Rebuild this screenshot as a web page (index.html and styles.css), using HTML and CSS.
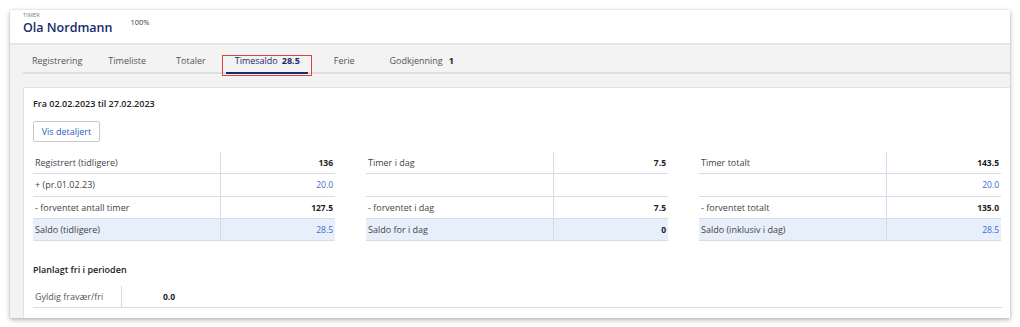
FILE: index.html
```html
<!DOCTYPE html>
<html lang="no">
<head>
<meta charset="utf-8">
<link rel="stylesheet" href="styles.css">
</head>
<body>
<div class="window">
  <header class="head">
    <div class="who">
      <div class="kicker">TIMER</div>
      <div class="name">Ola Nordmann</div>
    </div>
    <div class="pct">100%</div>
  </header>
  <div class="main">
    <nav class="tabs">
      <div class="tab t1">Registrering</div>
      <div class="tab t2">Timeliste</div>
      <div class="tab t3">Totaler</div>
      <div class="tab t4 active">Timesaldo <b>28.5</b></div>
      <div class="tab t5">Ferie</div>
      <div class="tab t6">Godkjenning <b>1</b></div>
    </nav>
    <section class="panel">
      <h2 class="title">Fra 02.02.2023 til 27.02.2023</h2>
      <button class="btn">Vis detaljert</button>
      <div class="tables">
        <div class="tbl">
          <div class="row"><span class="lbl">Registrert (tidligere)</span><span class="val">136</span></div>
          <div class="row"><span class="lbl">+ (pr.01.02.23)</span><span class="val blue">20.0</span></div>
          <div class="row"><span class="lbl">- forventet antall timer</span><span class="val">127.5</span></div>
          <div class="row sum"><span class="lbl">Saldo (tidligere)</span><span class="val blue">28.5</span></div>
        </div>
        <div class="tbl">
          <div class="row"><span class="lbl">Timer i dag</span><span class="val">7.5</span></div>
          <div class="row"><span class="lbl"></span><span class="val"></span></div>
          <div class="row"><span class="lbl">- forventet i dag</span><span class="val">7.5</span></div>
          <div class="row sum"><span class="lbl">Saldo for i dag</span><span class="val">0</span></div>
        </div>
        <div class="tbl">
          <div class="row"><span class="lbl">Timer totalt</span><span class="val">143.5</span></div>
          <div class="row"><span class="lbl"></span><span class="val blue">20.0</span></div>
          <div class="row"><span class="lbl">- forventet totalt</span><span class="val">135.0</span></div>
          <div class="row sum"><span class="lbl">Saldo (inklusiv i dag)</span><span class="val blue">28.5</span></div>
        </div>
      </div>
      <h2 class="title sub">Planlagt fri i perioden</h2>
      <div class="fri">
        <span class="lbl">Gyldig fravær/fri</span><span class="fval">0.0</span>
      </div>
    </section>
  </div>
</div>
</body>
</html>
```

FILE: styles.css
```css
* { box-sizing: border-box; }
html, body { margin: 0; padding: 0; background: #fff; }
body {
  font-family: "Open Sans", "Liberation Sans", sans-serif;
  font-size: 9px;
  color: #444;
  width: 1020px;
  height: 327px;
  overflow: hidden;
}
.window {
  margin: 10px 0 0 10px;
  width: 1000px;
  height: 308px;
  background: #f3f3f3;
  box-shadow: 0 2px 5px rgba(0,0,0,0.28), 0 0 2px rgba(0,0,0,0.12);
  overflow: hidden;
  display: flex;
  flex-direction: column;
}
.head {
  height: 35px;
  background: #fff;
  border-bottom: 2px solid #e6e6e6;
  display: flex;
  align-items: flex-start;
  padding: 2px 0 0 13px;
  flex-shrink: 0;
}
.kicker { font-size: 5.5px; color: #777; letter-spacing: 0.2px; line-height: 7px; }
.name { font-size: 12.5px; font-weight: 600; color: #1b2a6b; line-height: 16px; margin-top: 1px; }
.pct { font-size: 7.5px; color: #333; margin: 5px 0 0 18px; }
.main { flex: 1; padding-left: 13px; display: flex; flex-direction: column; min-height: 0; }
.tabs {
  display: flex;
  height: 29px;
  border-bottom: 2px solid #dedede;
  align-items: stretch;
  flex-shrink: 0;
}
.tab {
  position: relative;
  padding: 0 9px;
  display: flex;
  align-items: center;
  color: #555;
  border-bottom: 2px solid transparent;
  margin-bottom: -2px;
  padding-top: 3px;
}
.tab b { font-weight: 700; color: #222; margin-left: 6px; }
.t2 { margin-left: 8px; }
.t3 { margin-left: 12px; }
.t4 { margin-left: 11px; }
.t5 { margin-left: 17px; }
.t6 { margin-left: 17px; }
.tab.active { color: #1b2a6b; border-bottom-color: #1b2a6b; padding-right: 8px; }
.tab.active b { color: #1b2a6b; margin-left: 4px; }
.tab.active::after {
  content: "";
  position: absolute;
  left: -4px; right: -4px; top: 10px; bottom: -4px;
  border: 1.5px solid #d9453f;
}
.panel {
  margin-top: 13px;
  flex: 1;
  background: #fff;
  border: 1px solid #e2e2e2;
  border-right: 0;
  border-bottom: 0;
  padding: 9px 0 0 9px;
}
.title { margin: 0; font-size: 9px; font-weight: 600; color: #222; line-height: 13px; }
.btn {
  margin-top: 11px;
  display: block;
  width: 67px;
  height: 21px;
  border: 1px solid #c9c9c9;
  border-radius: 2px;
  background: #fff;
  color: #2c5cc5;
  font-family: inherit;
  font-size: 9px;
  font-weight: 500;
  padding: 0;
}
.tables {
  margin-top: 10px;
  display: grid;
  grid-template-columns: 302px 302px 302px;
  column-gap: 31px;
}
.row {
  display: grid;
  grid-template-columns: 188px 1fr;
  height: 22.33px;
  border-bottom: 1px solid #d6dbe7;
}
.row.sum { background: #e7effa; }
.lbl {
  display: flex;
  align-items: center;
  padding-left: 2px;
  border-right: 1px solid #d6dbe7;
  color: #444;
}
.val {
  display: flex;
  align-items: center;
  justify-content: flex-end;
  padding-right: 2px;
  font-weight: 700;
  color: #222;
  font-size: 8.5px;
}
.val.blue { color: #3a6bd3; font-weight: 500; }
.title.sub { margin-top: 22px; }
.fri {
  margin-top: 10px;
  width: 969px;
  display: grid;
  grid-template-columns: 89px 1fr;
  height: 22px;
  border-bottom: 1px solid #d6dbe7;
}
.fri .lbl { padding-left: 2px; color: #555; }
.fval { display: flex; align-items: center; padding-left: 41px; font-weight: 700; color: #222; font-size: 8.5px; }
```
